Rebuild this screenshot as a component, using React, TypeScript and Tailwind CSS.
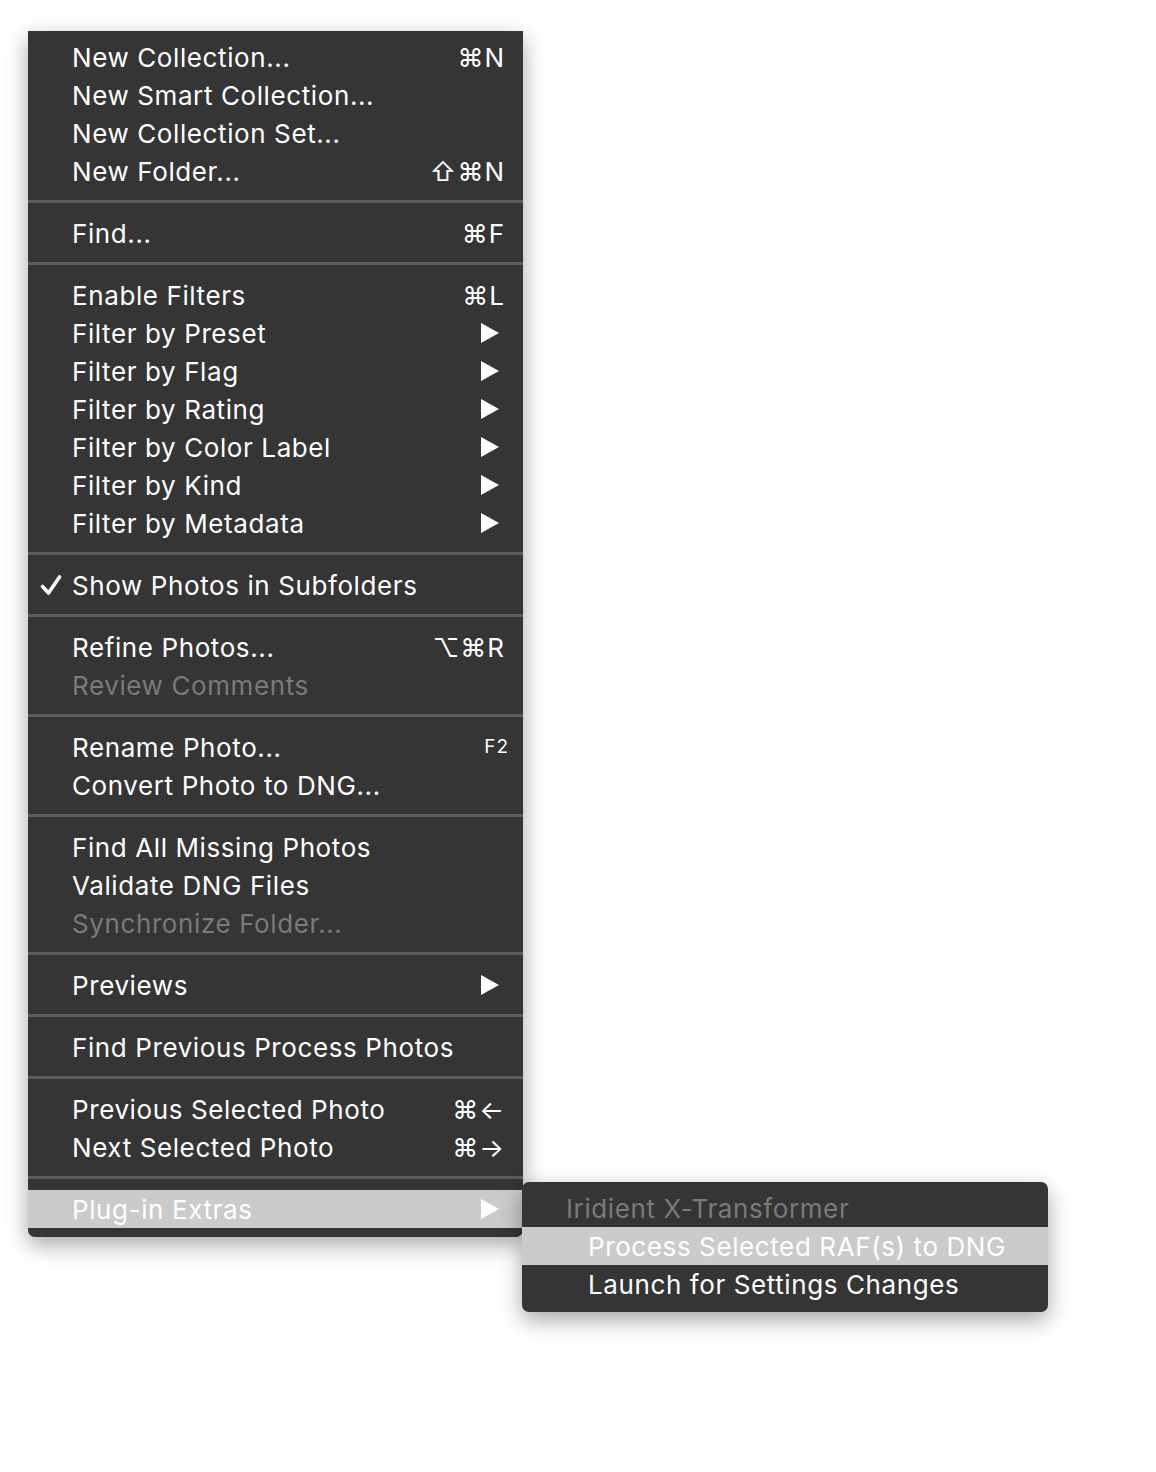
import React from "react";

type Item = {
  label: string;
  shortcut?: string;
  sub?: boolean;
  disabled?: boolean;
  checked?: boolean;
  small?: boolean;
};

const sections: Item[][] = [
  [
    { label: "New Collection...", shortcut: "⌘N" },
    { label: "New Smart Collection..." },
    { label: "New Collection Set..." },
    { label: "New Folder...", shortcut: "⇧⌘N" },
  ],
  [{ label: "Find...", shortcut: "⌘F" }],
  [
    { label: "Enable Filters", shortcut: "⌘L" },
    { label: "Filter by Preset", sub: true },
    { label: "Filter by Flag", sub: true },
    { label: "Filter by Rating", sub: true },
    { label: "Filter by Color Label", sub: true },
    { label: "Filter by Kind", sub: true },
    { label: "Filter by Metadata", sub: true },
  ],
  [{ label: "Show Photos in Subfolders", checked: true }],
  [
    { label: "Refine Photos...", shortcut: "⌥⌘R" },
    { label: "Review Comments", disabled: true },
  ],
  [
    { label: "Rename Photo...", shortcut: "F2", small: true },
    { label: "Convert Photo to DNG..." },
  ],
  [
    { label: "Find All Missing Photos" },
    { label: "Validate DNG Files" },
    { label: "Synchronize Folder...", disabled: true },
  ],
  [{ label: "Previews", sub: true }],
  [{ label: "Find Previous Process Photos" }],
  [
    { label: "Previous Selected Photo", shortcut: "⌘←" },
    { label: "Next Selected Photo", shortcut: "⌘→" },
  ],
];

const font = { fontFamily: "Inter, 'DejaVu Sans', sans-serif" };

const Triangle = () => (
  <svg width="18" height="20" viewBox="0 0 18 20" className="mr-[6px]">
    <path d="M0 0 L18 10 L0 20 Z" fill="currentColor" />
  </svg>
);

const Check = () => (
  <svg
    width="22"
    height="22"
    viewBox="0 0 22 22"
    className="absolute left-[12px] top-[8px]"
  >
    <path
      d="M2.5 12.5 L8.5 19 L19.5 3"
      fill="none"
      stroke="currentColor"
      strokeWidth="3.6"
      strokeLinecap="round"
      strokeLinejoin="round"
    />
  </svg>
);

const Row = ({ item }: { item: Item }) => (
  <div
    className={`relative flex items-center h-[38px] pl-[44px] pr-[18px] text-[26px] tracking-[0.6px] ${
      item.disabled ? "text-[#7a7a7a]" : "text-white"
    }`}
  >
    {item.checked && <Check />}
    <span className="flex-1 whitespace-nowrap">{item.label}</span>
    {item.shortcut && (
      <span
        className={`whitespace-nowrap tracking-[1px] ${
          item.small ? "text-[19px] -mr-[4px]" : "text-[26px]"
        }`}
      >
        {item.shortcut}
      </span>
    )}
    {item.sub && <Triangle />}
  </div>
);

const Separator = () => (
  <div className="pt-[10px] pb-[11px]">
    <div className="h-[3px] bg-[#5c5c5c]" />
  </div>
);

export default function App() {
  return (
    <div className="min-h-[1472px] bg-white pt-[31px] pl-[28px]" style={font}>
      <div className="relative w-[495px] bg-[#353535] pt-[7px] pb-[9px] rounded-b-[7px] shadow-[0_8px_22px_rgba(0,0,0,0.35)]">
        {sections.map((sec, i) => (
          <div key={i}>
            {sec.map((item) => (
              <Row key={item.label} item={item} />
            ))}
            <Separator />
          </div>
        ))}
        <div className="relative flex items-center h-[38px] pl-[44px] pr-[18px] text-[26px] tracking-[0.6px] text-white bg-[#cbcbcb]">
          <span className="flex-1">Plug-in Extras</span>
          <Triangle />
          <div className="absolute left-[494px] top-[-8px] w-[526px] bg-[#353535] rounded-[7px] pt-[7px] pb-[9px] shadow-[0_8px_22px_rgba(0,0,0,0.35)]">
            <div className="flex items-center h-[38px] pl-[44px] text-[#7a7a7a] whitespace-nowrap">
              Iridient X-Transformer
            </div>
            <div className="flex items-center h-[38px] pl-[66px] bg-[#cbcbcb] text-white whitespace-nowrap">
              Process Selected RAF(s) to DNG
            </div>
            <div className="flex items-center h-[38px] pl-[66px] text-white whitespace-nowrap">
              Launch for Settings Changes
            </div>
          </div>
        </div>
      </div>
    </div>
  );
}
